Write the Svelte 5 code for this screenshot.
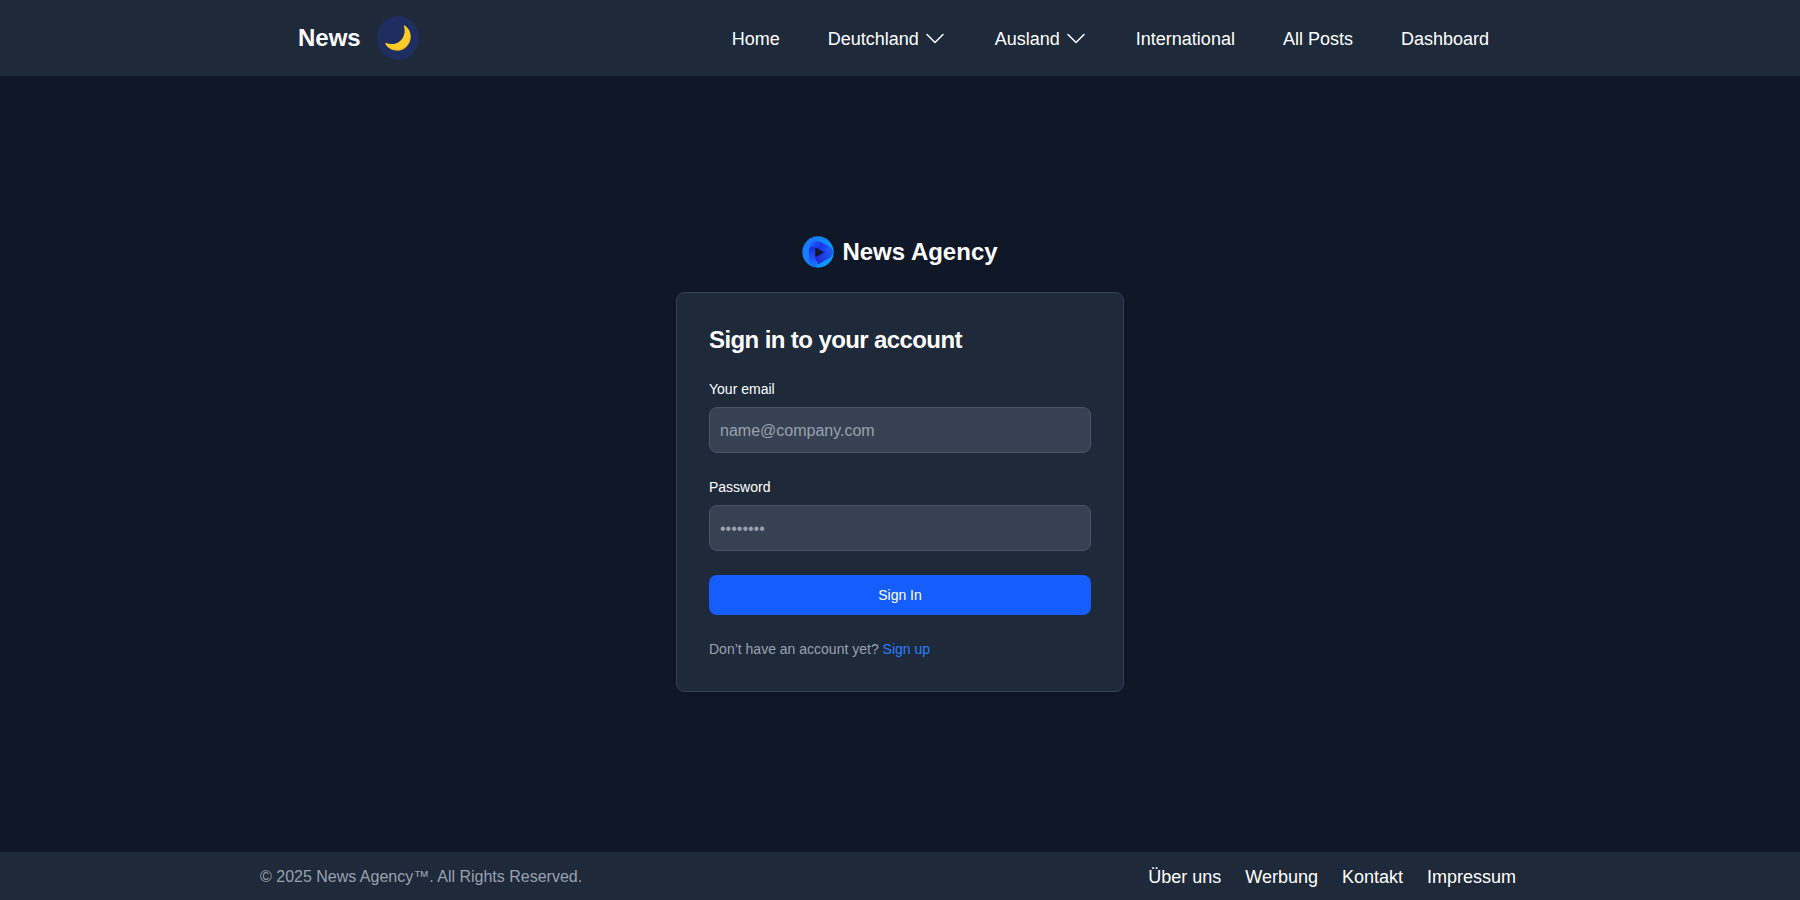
<script>
  const navItems = [
    { label: 'Home' },
    { label: 'Deutchland', menu: true },
    { label: 'Ausland', menu: true },
    { label: 'International' },
    { label: 'All Posts' },
    { label: 'Dashboard' }
  ];
  const footerLinks = ['Über uns', 'Werbung', 'Kontakt', 'Impressum'];
  let email = $state('');
  let password = $state('');
</script>

<div class="page">
  <header>
    <div class="bar">
      <div class="brand">
        <a class="name" href="#home">News</a>
        <button class="theme" type="button" aria-label="Toggle theme">
          <svg width="26" height="26" viewBox="0 0 26 26" aria-hidden="true">
            <path d="M19.6 0.4C23.6 3 26 7.3 25.7 12.2 25.2 20 19 25.8 11.6 25.6 6.8 25.4 2.4 22.900 0.300 18.800 0 18.200 0.600 17.700 1.200 18 4.500 19.600 9.700 19.600 13.900 16.900 19.300 13.500 20.700 7 18.900 1.100 18.700 0.400 19.200 0.100 19.600 0.400Z" fill="#ffca28" />
            <path d="M0.300 18.800C2.400 22.900 6.800 25.400 11.600 25.600 19 25.800 25.200 20 25.700 12.200 24.700 19.200 18.700 24.300 12.200 24.300 7.500 24.300 3.200 22.300 0.300 18.800Z" fill="#f0a51c" opacity=".6" />
          </svg>
        </button>
      </div>
      <nav aria-label="Main">
        {#each navItems as item}
          {#if item.menu}
            <button class="item menu" type="button">
              {item.label}
              <svg width="18" height="18" viewBox="0 0 18 18" aria-hidden="true">
                <path d="M1 4.500 9 12.500 17 4.500" fill="none" stroke="currentColor" stroke-width="1.500" stroke-linecap="round" stroke-linejoin="round" />
              </svg>
            </button>
          {:else}
            <a class="item" href="#{item.label}">{item.label}</a>
          {/if}
        {/each}
      </nav>
    </div>
  </header>

  <main>
    <a class="logo" href="#home">
      <svg width="32" height="32" viewBox="0 0 32 32" aria-hidden="true">
        <defs>
          <linearGradient id="ring" x1="0" y1="0" x2="1" y2=".6">
            <stop offset="0" stop-color="#1c74fa" />
            <stop offset=".5" stop-color="#1482ff" />
            <stop offset="1" stop-color="#0a9cff" />
          </linearGradient>
          <linearGradient id="arm" gradientUnits="userSpaceOnUse" x1="8" y1="6" x2="28" y2="18">
            <stop offset="0" stop-color="#1c6cff" />
            <stop offset=".45" stop-color="#1a35e6" />
            <stop offset="1" stop-color="#1b5cfa" />
          </linearGradient>
          <linearGradient id="leg" gradientUnits="userSpaceOnUse" x1="10" y1="10" x2="10" y2="29">
            <stop offset="0" stop-color="#1b2ad6" />
            <stop offset=".5" stop-color="#1c4af2" />
            <stop offset="1" stop-color="#1870ff" />
          </linearGradient>
          <linearGradient id="tail" gradientUnits="userSpaceOnUse" x1="28" y1="15" x2="12" y2="26">
            <stop offset="0" stop-color="#1c58f8" />
            <stop offset="1" stop-color="#1f20c4" />
          </linearGradient>
        </defs>
        <circle cx="16" cy="16" r="15.700" fill="url(#ring)" />
        <path d="M12 9 26 16 12 25Z" fill="#1b2bd6" />
        <path d="M11 9.500C14 7.500 17 8.500 19 9.800L26 13.800" fill="none" stroke="url(#arm)" stroke-width="6.500" stroke-linecap="round" />
        <path d="M27 14.500C28.500 17.500 26.500 19 24.500 20L16 24.700" fill="none" stroke="url(#tail)" stroke-width="6.500" stroke-linecap="round" />
        <path d="M10.300 14V23C10.300 25 11 26.500 12.500 27.500" fill="none" stroke="url(#leg)" stroke-width="6.500" stroke-linecap="round" />
        <path d="M13.300 11.500 21.500 16.300 13.300 21.300Z" fill="#101828" />
      </svg>
      News Agency
    </a>

    <section class="card">
      <h1>Sign in to your account</h1>
      <form onsubmit={(e) => e.preventDefault()}>
        <div>
          <label for="email">Your email</label>
          <input id="email" type="email" placeholder="name@company.com" bind:value={email} />
        </div>
        <div>
          <label for="password">Password</label>
          <input id="password" type="password" placeholder="••••••••" bind:value={password} />
        </div>
        <button class="submit" type="submit">Sign In</button>
        <p>Don’t have an account yet? <a href="#signup">Sign up</a></p>
      </form>
    </section>
  </main>

  <footer>
    <div class="foot">
      <span>© 2025 News Agency™. All Rights Reserved.</span>
      <nav aria-label="Footer">
        {#each footerLinks as link}
          <a href="#{link}">{link}</a>
        {/each}
      </nav>
    </div>
  </footer>
</div>

<style>
  :global(body) {
    margin: 0;
    background: #101828;
  }
  .page {
    min-height: 100vh;
    display: flex;
    flex-direction: column;
    font: 16px/24px "Liberation Sans", Arial, sans-serif;
    color: #fff;
  }
  .page :global(*) {
    box-sizing: border-box;
  }
  a {
    color: inherit;
    text-decoration: none;
  }
  button, input {
    font: inherit;
    color: inherit;
    margin: 0;
  }
  button {
    border: 0;
    cursor: pointer;
  }
  header, footer {
    background: #1e2939;
  }
  .bar {
    max-width: 1280px;
    margin: 0 auto;
    padding: 16px 51px 16px 38px;
    display: flex;
    align-items: center;
    justify-content: space-between;
  }
  .brand {
    display: flex;
    align-items: center;
    gap: 16px;
  }
  .name {
    font-size: 24px;
    font-weight: 700;
  }
  .theme {
    display: flex;
    align-items: center;
    justify-content: center;
    width: 42px;
    height: 44px;
    padding: 0;
    border-radius: 50%;
    background: #1e2e60;
  }
  .bar nav {
    display: flex;
    gap: 48px;
    padding-top: 2px;
  }
  .item {
    display: flex;
    align-items: center;
    gap: 8px;
    padding: 0;
    background: none;
    font-size: 18px;
    line-height: 28px;
  }
  .menu {
    gap: 7px;
    padding-right: 3px;
  }
  main {
    flex: 1;
    display: flex;
    flex-direction: column;
    align-items: center;
    justify-content: center;
    gap: 24px;
    padding: 24px;
  }
  .logo {
    display: flex;
    align-items: center;
    gap: 8px;
    font-size: 24px;
    line-height: 32px;
    font-weight: 700;
  }
  .card {
    width: 100%;
    max-width: 448px;
    padding: 32px;
    border: 1px solid #364153;
    border-radius: 8px;
    background: #1e2939;
    box-shadow: 0 1px 3px rgba(0, 0, 0, 0.1), 0 1px 2px rgba(0, 0, 0, 0.1);
  }
  h1 {
    margin: 0 0 24px;
    font-size: 24px;
    line-height: 30px;
    letter-spacing: -0.025em;
  }
  form {
    display: flex;
    flex-direction: column;
    gap: 24px;
    font-size: 14px;
    line-height: 20px;
  }
  label {
    display: block;
    margin-bottom: 8px;
  }
  input {
    display: block;
    width: 100%;
    padding: 11px 10px 9px;
    border: 1px solid #4a5565;
    border-radius: 8px;
    background: #364153;
    font-size: 16px;
    line-height: 24px;
    height: 46px;
  }
  input::placeholder {
    color: #99a1af;
    opacity: 1;
  }
  .submit {
    padding: 10px 20px;
    border-radius: 8px;
    background: #155dfc;
  }
  p {
    margin: 0;
    color: #99a1af;
  }
  p a {
    color: #2b7fff;
  }
  .foot {
    max-width: 1280px;
    margin: 0 auto;
    padding: 11px 24px 9px 0;
    display: flex;
    align-items: center;
    justify-content: space-between;
    color: #99a1af;
  }
  .foot nav {
    display: flex;
    gap: 24px;
    font-size: 18px;
    line-height: 28px;
    color: #fff;
  }
</style>
